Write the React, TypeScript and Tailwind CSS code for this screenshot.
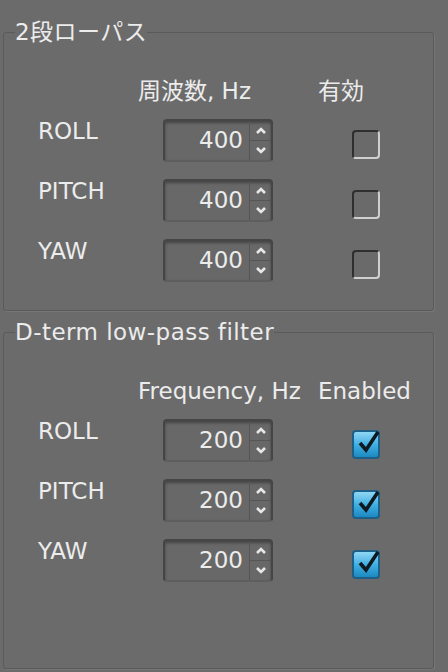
import React from "react";

const font = { fontFamily: '"DejaVu Sans", "Noto Sans CJK JP", sans-serif' };

type Row = { label: string; value: number; enabled: boolean };

const Spinner = ({ value }: { value: number }) => (
  <div className="flex h-[43px] w-[110px] rounded-[4px] border-2 border-[#454545] border-b-[#5e5e5e] bg-[#686868] shadow-[inset_0_2px_3px_rgba(0,0,0,0.35)]">
    <div className="flex flex-1 items-center justify-end pr-[6px] text-[23px] leading-none text-[#ececec]">
      {value}
    </div>
    <div className="flex w-[22px] flex-col border-l border-[#555555]">
      <div className="flex flex-1 items-center justify-center border-b border-[#555555]">
        <svg width="12" height="9" viewBox="0 0 12 9">
          <path d="M2 7 L6 3 L10 7" fill="none" stroke="#e8e8e8" strokeWidth="2.6" />
        </svg>
      </div>
      <div className="flex flex-1 items-center justify-center">
        <svg width="12" height="9" viewBox="0 0 12 9">
          <path d="M2 2 L6 6 L10 2" fill="none" stroke="#e8e8e8" strokeWidth="2.6" />
        </svg>
      </div>
    </div>
  </div>
);

const Check = ({ on }: { on: boolean }) =>
  on ? (
    <div className="relative mt-[11px] h-[29px] w-[28px] rounded-[4px] border-2 border-[#1d5f86] bg-gradient-to-b from-[#8fd6f4] via-[#3fb0e2] to-[#1c8ac2]">
      <svg className="absolute left-[1px] top-[-4px]" width="28" height="28" viewBox="0 0 28 28">
        <path d="M5 15 L11 22 L23 4" fill="none" stroke="#0d1a22" strokeWidth="3.6" />
      </svg>
    </div>
  ) : (
    <div className="mt-[11px] h-[29px] w-[28px] rounded-[4px] border-2 border-t-[#2f2f2f] border-l-[#2f2f2f] border-r-[#cfcfcf] border-b-[#cfcfcf] bg-[#6a6a6a]" />
  );

const Group = ({
  title,
  freq,
  enabled,
  rows,
  height,
}: {
  title: string;
  freq: string;
  enabled: string;
  rows: Row[];
  height: string;
}) => (
  <fieldset
    className={`ml-[3px] mr-[14px] rounded-[3px] border border-[#5a5a5a] shadow-[1px_1px_0_rgba(255,255,255,0.08)] ${height}`}
  >
    <legend className="ml-[11px] text-[23px] leading-[24px] tracking-[0.02em] text-[#ececec]">{title}</legend>
    <div className="flex pl-[134px] pt-[35px] text-[23px] leading-[24px] text-[#ececec]">
      <div className="w-[180px]">{freq}</div>
      <div>{enabled}</div>
    </div>
    <div className="mt-[16px] flex flex-col gap-[17px]">
      {rows.map((r) => (
        <div key={r.label} className="flex items-start">
          <div className="w-[159px] pl-[34px] text-[23px] leading-[24px] text-[#ececec]">
            {r.label}
          </div>
          <Spinner value={r.value} />
          <div className="ml-[79px]">
            <Check on={r.enabled} />
          </div>
        </div>
      ))}
    </div>
  </fieldset>
);

export default function App() {
  return (
    <div className="flex h-[672px] w-[448px] flex-col gap-[9px] overflow-hidden bg-[#6b6b6b] pt-[20px]" style={font}>
      <Group
        title="2段ローパス"
        freq="周波数, Hz"
        enabled="有効"
        height="h-[291px]"
        rows={[
          { label: "ROLL", value: 400, enabled: false },
          { label: "PITCH", value: 400, enabled: false },
          { label: "YAW", value: 400, enabled: false },
        ]}
      />
      <Group
        title="D-term low-pass filter"
        freq="Frequency, Hz"
        enabled="Enabled"
        height="h-[349px]"
        rows={[
          { label: "ROLL", value: 200, enabled: true },
          { label: "PITCH", value: 200, enabled: true },
          { label: "YAW", value: 200, enabled: true },
        ]}
      />
    </div>
  );
}
